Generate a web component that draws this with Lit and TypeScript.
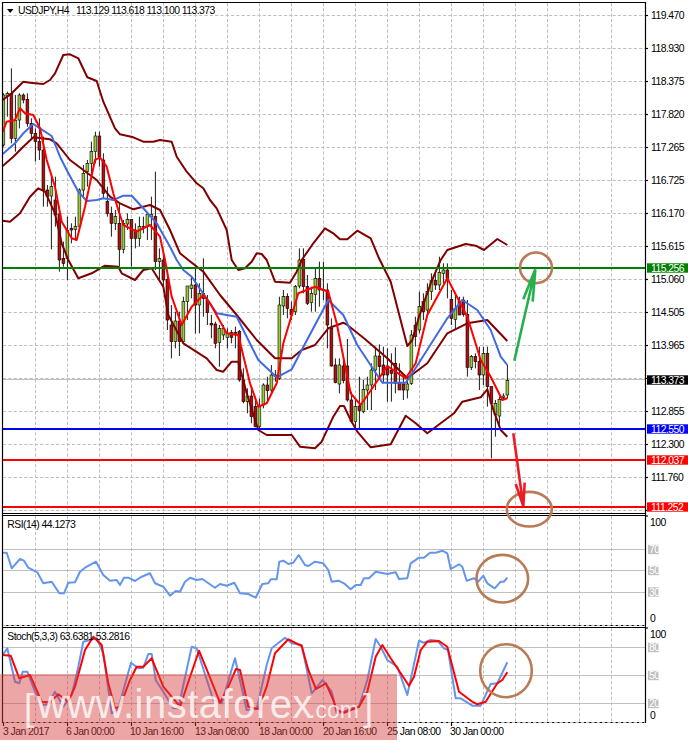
import { LitElement, html, svg, css } from "lit";
import { customElement } from "lit/decorators.js";

type Seg = [number, number, number[]];
const pts = (segs: Seg[]) =>
  segs
    .map(([ox, oy, a]) => {
      const out: string[] = [];
      for (let i = 0; i < a.length; i += 2) out.push(`${(ox + a[i] / 3).toFixed(1)},${(oy + a[i + 1] / 3).toFixed(1)}`);
      return out.join(" ");
    })
    .join(" ");

const upper = pts([
  [0, 0, [8,300,35,280,70,245,90,248,130,252,150,240,165,220,190,165,210,163,235,175,262,232,290,243,310,305,345,385,360,403,400,412,430,425,460,425,480,420,515,425,530,470,560,515,590,550,610,565,630,600,650,625,680,690,695,780]],
  [0, 260, [715,30,735,25,755,5]],
  [0, 0, [770,760,785,762]],
  [0, 260, [800,0,825,65,870,68,890,35,905,0]],
  [0, 0, [940,730,975,685,1000,700,1020,718]],
  [344, 0, [10,718,40,692,80,715,105,775]],
  [344, 260, [140,65,190,258,205,240,225,170,260,70,290,0]],
  [344, 0, [310,750,365,732,395,737,420,750,460,717,490,735]],
]);
const mid = pts([
  [0, 0, [8,498,40,470,70,440,100,412,150,418,170,430,210,480,250,510,290,540,330,590,360,610,400,628,450,615,480,630,510,690,540,760,565,780]],
  [0, 260, [610,35,660,105,710,165,770,240,825,295,875,295,905,270,945,255,985,205,1030,188]],
  [344, 260, [10,195,60,235,130,295,190,355,250,310,310,220,370,190,430,180,490,243]],
]);
const lower = pts([
  [0, 0, [8,662,30,665,60,640,90,590,115,565,135,575,165,640,185,730,205,780]],
  [0, 260, [235,55,275,40,315,17,355,20,365,40,405,60,430,30,455,25,490,80,505,165,550,250,620,295,650,330,670,335,695,305,715,305,740,400,775,510,800,525,875,525,900,560,945,565,965,545,1000,470,1020,438,1032,438]],
  [344, 260, [15,470,40,515,80,562,140,553,185,467,215,490,250,520,330,460,355,425,410,412,430,388,445,440,470,510,490,530]],
]);
const blue = pts([
  [0, 0, [8,462,45,430,70,400,100,372,120,385,155,408,180,470,200,510,235,575,260,603,290,600,310,595,340,600,370,587,395,587,430,625,470,670,510,740,530,780]],
  [0, 260, [550,30,575,50,650,160,710,170,775,300,830,352,875,328,905,270,985,120,1030,165]],
  [344, 260, [40,255,115,368,185,368,205,340,310,175,355,120,400,150,440,210,470,290,490,315]],
]);
const redMa = pts([
  [0, 0, [8,395,20,365,45,360,60,325,75,340,100,345,120,385,140,480,165,560,185,665,215,715,230,720,255,620,285,480,300,472,320,500,340,580,355,630,370,675,410,695,450,675,480,710,495,780]],
  [0, 260, [515,110,545,195,575,140,610,105,630,130,680,220,715,225,750,370,775,440,800,430,830,370,850,250,895,100,945,80,985,95,1010,190,1030,290]],
  [344, 260, [20,400,50,435,85,385,130,318,185,355,215,310,250,165,310,55,370,170,410,300,440,350,475,420,490,415]],
]);
const rsi = pts([
  [0, 510, [8,128,20,128,35,175,60,147,72,152,85,173,112,187,130,220,155,215,178,250,192,250,205,218,225,217,240,185,255,173,288,155,310,195,330,212,350,210,360,225,372,203,385,203,405,213,425,200,450,190,465,220,490,230,510,257,527,243,540,245,555,215,570,203,590,210,607,207,645,233,660,222,680,227,703,218,720,250,745,252,767,263,787,222,805,220,812,208,830,208,838,155,850,152,865,162,880,158,896,135,915,165,925,168,945,155,970,160,985,180,995,215,1015,212,1032,220]],
  [344, 510, [20,238,35,225,50,225,60,205,75,205,95,185,130,192,155,187,165,207,190,205,200,160,225,143,240,143,258,128,275,128,295,122,310,130,320,177,345,163,355,170,368,212,390,205,403,215,418,197,430,220,452,235,470,215,480,215,490,203]],
]);
const stochB = pts([
  [0, 510, [8,435,22,415,45,515,58,520,68,485,82,485,105,545,130,585,145,583,165,545,190,590,215,555,235,470,250,395,290,385,310,430,335,610,355,597,380,505,393,458,415,475,430,473,445,432,455,432,467,510,490,545,520,595,535,595,575,410,590,415,640,570,665,580,705,445,740,600,770,597,800,465,815,415,855,383,875,400,905,405,935,550,968,510,995,545,1010,610,1032,605]],
  [344, 510, [20,595,45,590,70,510,95,387,110,410,130,450,160,470,190,555,225,392,240,398,260,390,280,392,300,415,312,420,335,565,350,565,385,587,410,587,440,522,460,520,490,457]],
]);
const stochR = pts([
  [0, 510, [8,435,32,437,58,505,90,495,125,575,150,577,175,553,205,575,225,530,255,420,280,380,305,405,325,520,345,595,360,590,390,510,410,470,430,470,455,445,490,530,540,590,560,530,597,422,625,490,660,578,685,530,708,477,720,480,745,590,775,597,800,530,825,430,865,388,905,408,925,480,948,537,978,520,1000,570,1010,600,1032,608]],
  [344, 510, [45,590,70,545,95,440,115,405,140,445,170,490,195,527,210,500,230,420,250,395,285,393,310,410,345,545,385,575,400,583,425,575,460,520,475,510,490,487]],
]);

// hi, bodyTop, bodyBottom, lo, bull (1) — in 3x zoom units
const C: number[][] = [
[280,285,435,440,1],[275,280,288,350,1],[205,280,415,430,0],[285,362,415,455,1],[280,285,360,385,1],[280,285,300,310,0],[280,298,370,380,0],[355,370,400,415,0],[385,400,425,485,0],[355,425,450,480,0],
[410,450,570,620,0],[555,570,590,620,0],[520,560,588,748,1],[530,600,645,680,0],[620,642,780,815,0],[725,775,790,800,0],[650,692,775,840,1],[670,686,690,730,0],[650,680,688,720,1],[565,570,680,695,1],
[495,520,570,590,1],[480,490,515,560,1],[425,455,490,520,1],[395,408,455,490,1],[395,408,470,500,0],[460,480,580,595,0],[560,605,640,650,0],[620,640,670,710,0],[630,650,670,690,1],[610,670,748,800,0],
[660,670,748,760,1],[640,658,672,690,1],[658,658,715,800,0],[670,690,715,745,0],[650,680,715,740,1],[650,680,683,700,0],[640,643,680,720,1],[590,643,650,720,1],[515,650,785,810,0],[745,775,785,840,1],
[760,780,840,860,0],[820,838,960,990,0],[915,975,1025,1075,0],[935,963,1025,1045,1],[935,963,1025,1068,0],[890,905,1025,1030,1],[860,858,905,960,1],[830,855,865,895,1],[800,855,915,1000,0],[850,880,915,1000,1],
[775,880,895,950,0],[885,900,938,975,0],[945,970,975,1015,0],[965,972,1030,1045,0],[975,985,1028,1100,1],[975,985,1005,1020,1],[985,1000,1012,1045,1],[990,998,1012,1030,0],[980,998,1005,1045,0],[990,995,1140,1145,0],
[1105,1140,1205,1210,0],[1165,1188,1205,1240,1],[1160,1188,1250,1270,0],[1190,1220,1280,1282,0],[1195,1220,1280,1285,1],[1150,1155,1215,1225,1],[1130,1155,1172,1200,0],[1095,1125,1170,1180,1],[1110,1125,1130,1145,0],[890,915,1135,1140,1],
[870,890,918,945,1],[880,890,925,955,0],[905,928,945,960,0],[855,860,935,945,1],[745,780,858,865,1],[745,778,860,880,0],[825,860,910,915,0],[860,880,908,935,1],[805,835,883,935,1],[785,835,870,920,0],
[785,868,872,900,0],[850,870,975,1045,0],[955,985,1098,1100,0],[1075,1095,1148,1150,0],[1075,1095,1152,1180,1],[1070,1098,1142,1150,0],[1017,1098,1200,1205,0],[1175,1200,1265,1270,0],[1200,1220,1265,1285,1],[1130,1218,1232,1285,0],
[1140,1168,1235,1240,1],[1130,1155,1170,1230,1],[1090,1110,1155,1230,1],[1040,1068,1110,1170,1],[1033,1068,1100,1130,0],[1040,1095,1125,1150,0],[1045,1098,1125,1205,0],[1060,1110,1120,1205,0],[1042,1090,1150,1180,0],[1090,1150,1170,1170,0],
[1130,1152,1170,1200,0],[1130,1152,1170,1195,1],[990,1005,1150,1155,1],[950,975,1010,1040,0],[875,920,990,1000,1],[880,905,935,960,0],[850,875,930,950,1],[820,842,875,900,1],[820,842,855,870,0],[770,818,855,870,1],
[790,810,820,850,1],[790,810,835,895,0],[870,898,955,975,0],[880,925,958,990,1],[890,905,945,945,0],[890,900,943,950,0],[900,943,1102,1130,0],[1065,1070,1102,1110,1],[1060,1070,1085,1105,0],[1040,1085,1125,1170,0],
[1040,1060,1125,1155,1],[1040,1060,1160,1220,0],[1160,1160,1210,1375,0],[1200,1210,1245,1310,1],[1190,1198,1248,1280,1],[1180,1188,1192,1200,1],[1095,1142,1185,1195,1],
];

const vGrid = Array.from({ length: 19 }, (_, k) => 35.5 + 32 * k);
const hGrid = Array.from({ length: 16 }, (_, k) => 15.5 + 33 * k);
const axisMain: [string, number][] = [
  ["119.470",15.5],["118.930",48.5],["118.375",81.5],["117.820",114.5],["117.265",147.5],["116.725",180.5],["116.170",213.5],["115.615",246.5],
  ["115.060",279.5],["114.505",312.5],["113.965",345.5],["112.855",411.5],["112.300",444.5],["111.760",477.5],
];
const priceTags: [string, number, string][] = [
  ["115.256", 268, "#008000"],
  ["113.373", 380, "#000000"],
  ["112.550", 429, "#0000ff"],
  ["112.037", 460, "#ff0000"],
  ["111.252", 507, "#ff0000"],
];
const times: [string, number][] = [
  ["3 Jan 2017",3],["6 Jan 00:00",66],["10 Jan 16:00",130],["13 Jan 08:00",195],["18 Jan 00:00",259],["20 Jan 16:00",323],["25 Jan 08:00",387],["30 Jan 00:00",450],
];
const subAxis: [string, number, boolean][] = [
  ["100",522,false],["70",549.5,true],["50",570.5,true],["30",592,true],["0",618,false],
  ["100",634.5,false],["80",647.5,true],["50",675.5,true],["20",703.5,true],["0",715,false],
];

@customElement("app-root")
export class AppRoot extends LitElement {
  static styles = css`
    :host { display: block; width: 688px; height: 743px; background: #fff; overflow: hidden; }
    svg { display: block; }
    text { font-family: "Liberation Sans", Arial, sans-serif; font-size: 10.4px; letter-spacing: -0.55px; fill: #000; }
    .grid { stroke: #c0c0c0; stroke-width: 1; stroke-dasharray: 3.3 2; fill: none; }
    .level { stroke: #c0c0c0; stroke-width: 1; fill: none; }
    .frame { stroke: #000; stroke-width: 1.2; fill: none; }
    .band { stroke: #800000; stroke-width: 2; fill: none; stroke-linejoin: round; }
    .ma-blue { stroke: #4169e1; stroke-width: 2; fill: none; stroke-linejoin: round; }
    .ma-red { stroke: #ff0000; stroke-width: 2; fill: none; stroke-linejoin: round; }
    .osc { stroke: #6495ed; stroke-width: 2; fill: none; stroke-linejoin: round; }
    .wick { stroke: #000; stroke-width: 0.9; }
    .bull { fill: #9acd32; stroke: #000; stroke-width: 0.6; }
    .bear { fill: #b01010; stroke: #000; stroke-width: 0.6; }
    .ring { stroke: #b97a57; stroke-width: 2.6; fill: none; }
    .up { stroke: #22b14c; stroke-width: 2.6; fill: none; }
    .down { stroke: #ed1c24; stroke-width: 2.6; fill: none; }
    .tag { fill: #fff; }
    .sub-tag { fill: #fff; }
    .wm-box { fill: rgba(214, 60, 60, 0.46); }
    .wm { fill: rgba(255, 255, 255, 0.8); letter-spacing: 0; }
    .wm-big { font-size: 40px; letter-spacing: 0.5px; }
    .wm-small { font-size: 23px; }
    .wm-br { font-size: 36px; }
    .title-tri { fill: #000; }
  `;

  private candles() {
    return C.map((c, i) => {
      const x = 3.4 + 4 * i;
      const [hi, t, b, lo, bull] = c;
      return svg`<line class="wick" x1=${x} x2=${x} y1=${hi / 3} y2=${lo / 3}></line>
        <rect class=${bull ? "bull" : "bear"} x=${x - 1.4} width="2.8" y=${t / 3} height=${Math.max((b - t) / 3, 0.8)}></rect>`;
    });
  }

  render() {
    return html`<svg width="688" height="743" viewBox="0 0 688 743">
      <defs>
        <clipPath id="main"><rect x="3" y="3" width="642" height="510"></rect></clipPath>
      </defs>

      ${vGrid.map((x) => svg`
        <line class="grid" x1=${x} x2=${x} y1="3" y2="513"></line>
        <line class="grid" x1=${x} x2=${x} y1="516" y2="625"></line>
        <line class="grid" x1=${x} x2=${x} y1="628" y2="722"></line>`)}
      ${hGrid.map((y) => svg`<line class="grid" x1="3" x2="645" y1=${y} y2=${y}></line>`)}
      <line class="level" x1="3" x2="645" y1="379.5" y2="379.5"></line>
      ${[549.5, 570.5, 592.5, 647.5, 675.5, 703.5].map((y) => svg`<line class="level" x1="3" x2="645" y1=${y} y2=${y}></line>`)}

      <g clip-path="url(#main)">
        ${this.candles()}
        <polyline class="band" points=${upper}></polyline>
        <polyline class="band" points=${mid}></polyline>
        <polyline class="band" points=${lower}></polyline>
        <polyline class="ma-blue" points=${blue}></polyline>
        <polyline class="ma-red" points=${redMa}></polyline>
      </g>

      <line x1="3" x2="645" y1="268" y2="268" stroke="#008000" stroke-width="2"></line>
      <line x1="3" x2="645" y1="429" y2="429" stroke="#0000ff" stroke-width="2"></line>
      <line x1="3" x2="645" y1="460" y2="460" stroke="#ff0000" stroke-width="2"></line>
      <line x1="3" x2="645" y1="507" y2="507" stroke="#ff0000" stroke-width="2"></line>

      <polyline class="osc" points=${rsi}></polyline>
      <polyline class="osc" points=${stochB}></polyline>
      <polyline class="ma-red" points=${stochR}></polyline>

      <path class="frame" d="M2.5 2.5H645.5V722.5H2.5Z"></path>
      <path class="frame" d="M2.5 513.5H645.5M2.5 515.5H645.5M2.5 625.5H645.5M2.5 627.5H645.5"></path>
      <line class="grid" x1="3" x2="645" y1="625.5" y2="625.5"></line>
      <line class="grid" x1="3" x2="645" y1="722.5" y2="722.5"></line>

      ${hGrid.map((y) => svg`<line class="frame" x1="645" x2="648" y1=${y} y2=${y}></line>`)}
      ${[3.5, 67.5, 131.5, 195.5, 259.5, 323.5, 387.5, 451.5].map((x) => svg`<line class="frame" x1=${x} x2=${x} y1="722" y2="726"></line>`)}

      <polygon class="title-tri" points="7,9 13.5,9 10.2,13"></polygon>
      <text x="18" y="14">USDJPY,H4</text>
      <text x="76" y="14">113.129 113.618 113.100 113.373</text>
      <text x="7.3" y="528">RSI(14) 44.1273</text>
      <text x="7.3" y="640">Stoch(5,3,3) 63.6381 53.2816</text>

      ${axisMain.map(([t, y]) => svg`<text x="651" y=${y + 3.7}>${t}</text>`)}
      ${priceTags.map(([t, y, c]) => svg`
        <rect x="647" y=${y - 4.7} width="41" height="9.4" fill=${c}></rect>
        <text class="tag" x="651" y=${y + 3.7}>${t}</text>`)}
      ${subAxis.map(([t, y, boxed]) => boxed
        ? svg`<rect x="648" y=${y - 4.7} width=${t.length * 5.2 + 0.4} height="9.4" fill="#c0c0c0"></rect>
              <text class="sub-tag" x="649" y=${y + 3.7}>${t}</text>`
        : svg`<text x="650" y=${y + 3.7}>${t}</text>`)}
      ${[516, 628].map((y) => svg`<line class="frame" x1="645" x2="648" y1=${y} y2=${y}></line>`)}

      ${times.map(([t, x]) => svg`<text x=${x} y="735">${t}</text>`)}

      <rect class="wm-box" x="0" y="674" width="397" height="66"></rect>
      <text class="wm wm-br" x="24" y="720">[</text>
      <text class="wm wm-big" x="37" y="718">www.instaforex</text>
      <text class="wm wm-small" x="309" y="718">.com</text>
      <text class="wm wm-br" x="363" y="720">]</text>

      <ellipse class="ring" cx="536" cy="267.8" rx="16" ry="15.3"></ellipse>
      <ellipse class="ring" cx="529.3" cy="509.2" rx="22.5" ry="17.3"></ellipse>
      <ellipse class="ring" cx="502.3" cy="578.7" rx="25.8" ry="23.8"></ellipse>
      <ellipse class="ring" cx="506" cy="670.7" rx="25.8" ry="26.5"></ellipse>

      <path class="up" d="M514.3 360.7L535.3 269.3M523.3 299.3L535.3 269.3M532.7 301.7L535.3 269.3"></path>
      <path class="down" d="M513.3 433.3L523.3 506M515.7 484L523.3 506M524.7 482.7L523.3 506"></path>
    </svg>`;
  }
}
